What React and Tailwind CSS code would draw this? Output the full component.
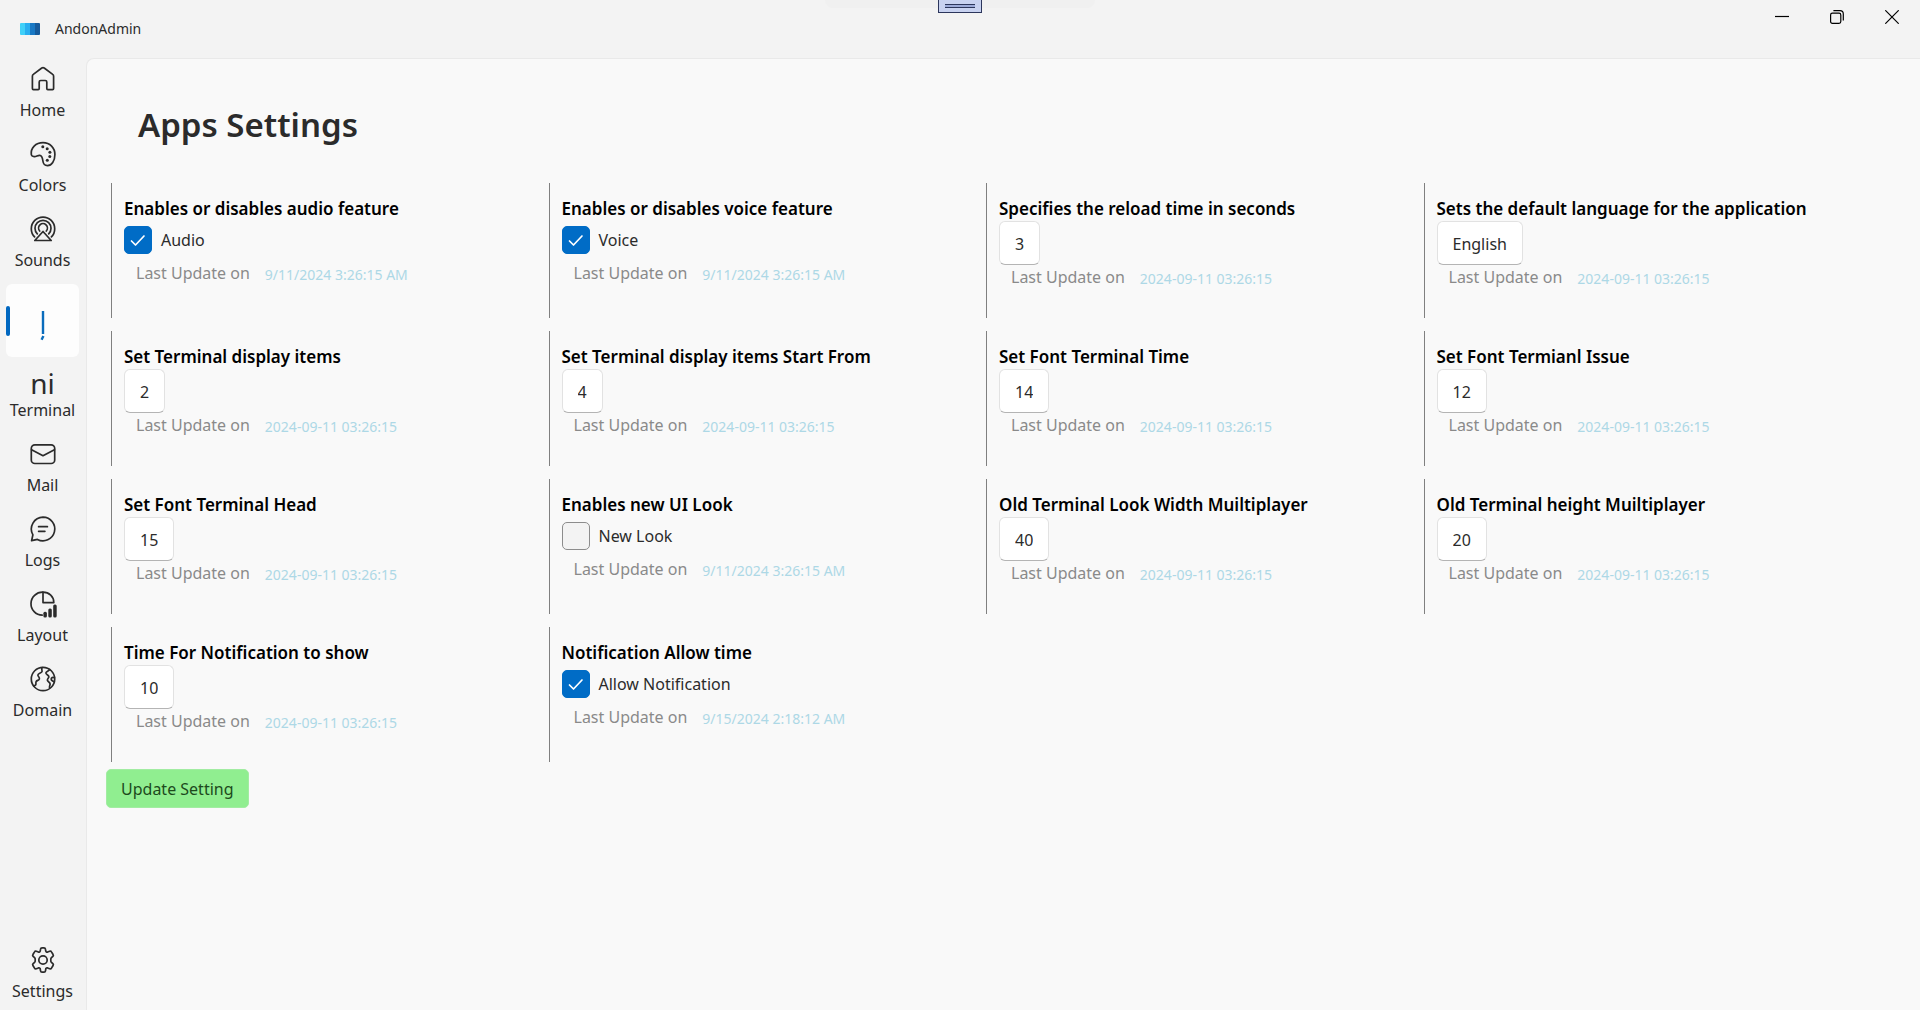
import React, { useState } from "react";

const strokeProps = {
  width: 30,
  height: 30,
  viewBox: "0 0 30 30",
  fill: "none",
  stroke: "currentColor",
  strokeWidth: 1.7,
  strokeLinecap: "round",
  strokeLinejoin: "round",
  "aria-hidden": true,
};

function HomeIcon() {
  return (
    <svg {...strokeProps}>
      <path d="M4.4 12.2c0-.7.3-1.400.9-1.800l8.500-6.400c.7-.5 1.700-.5 2.400 0l8.500 6.400c.6.4.9 1.100.9 1.800v12.400c0 .6-.4 1-1 1h-4.800c-.6 0-1-.4-1-1v-6.600c0-.9-.6-1.500-1.500-1.500h-4.600c-.9 0-1.500.6-1.500 1.500v6.600c0 .6-.4 1-1 1H5.400c-.6 0-1-.4-1-1z" />
    </svg>
  );
}

function PaletteIcon() {
  return (
    <svg {...strokeProps}>
      <path d="M3.300 15.500C2.500 8.800 7.800 3.700 15 3.700c7 0 11.900 5.300 11.900 11.700 0 6.600-3.300 11.200-7.400 11.200-3.400 0-4.300-2.200-4.600-4.600-.4-3.300-.8-5.400-3.200-5.600-2-.2-3.600 1.500-5.500 1.200-1.600-.2-2.700-.6-2.900-2.100z" />
      <g fill="currentColor" stroke="none">
        <circle cx="14.800" cy="7.700" r="1.500" />
        <circle cx="19.200" cy="9.700" r="1.500" />
        <circle cx="21.900" cy="13.300" r="1.500" />
        <circle cx="21.800" cy="17.600" r="1.500" />
        <circle cx="19.300" cy="21.300" r="1.500" />
      </g>
    </svg>
  );
}

function SoundsIcon() {
  return (
    <svg {...strokeProps}>
      <path d="M6.600 22.900a11.700 11.700 0 1 1 16.800 0" />
      <path d="M9.300 19.900a8 8 0 1 1 11.400 0" />
      <path d="M11.700 17a4.400 4.400 0 1 1 6.600 0" />
      <path d="M15 17.500l8.200 9H6.800z" />
    </svg>
  );
}

function PendingIcon() {
  return (
    <svg {...strokeProps} strokeLinecap="butt" strokeWidth="2.400">
      <path d="M15 4v23" />
      <path d="M15.400 29l-1.800 3.800" />
    </svg>
  );
}

function MailIcon() {
  return (
    <svg {...strokeProps}>
      <rect x="3.300" y="5.900" width="23.400" height="18.600" rx="3.600" />
      <path d="M3.600 10.700L15 16.700l11.400-6" />
    </svg>
  );
}

function LogsIcon() {
  return (
    <svg {...strokeProps}>
      <path d="M15 3.200a11.800 11.800 0 1 1-5.600 22.200l-5.800 1.300 1.300-5.900A11.800 11.800 0 0 1 15 3.200z" />
      <path d="M10.600 12.700h8.800M10.600 17.300h6.300" />
    </svg>
  );
}

function LayoutIcon() {
  return (
    <svg {...strokeProps}>
      <path d="M14.800 3.200a11.500 11.500 0 0 0-.6 23" />
      <path d="M15 3.200v10.400h10.800C26 7.700 21 3.200 15 3.200z" />
      <g stroke="none" fill="currentColor">
        <rect x="15.400" y="22.800" width="3.500" height="5.600" rx="1.500" />
        <rect x="20.300" y="19.600" width="3.500" height="8.800" rx="1.500" />
        <rect x="25.200" y="15.400" width="3.500" height="13" rx="1.500" />
      </g>
    </svg>
  );
}

function DomainIcon() {
  return (
    <svg {...strokeProps}>
      <circle cx="15" cy="15" r="11.700" />
      <path d="M14.200 3.600c-1.600 1.600 1 3.200-.6 4.600-1.600 1.300-3.600 1.200-3.700 2.900-.1 1.600 1.900 1.900 1.500 3.700-.3 1.700-2.300 1.300-3.200 2.600-.8 1.200.2 2.600-.6 3.700-.5.7-1.300.8-1.900.8" />
      <path d="M21.800 5.600c-1 1.300-3.600 1.700-3.900 3.300-.2 1.600 2.300 1.900 2.900 3.500.5 1.500-1.700 2.300-1.400 3.900.4 1.800 2.700 1.700 2.700 3.700 0 1.600-1.100 2.500-.5 4M26.400 13.700c-1.800-.7-3.200 0-3.200 1.400 0 1.200 1 2.100 2.700 2.500" />
    </svg>
  );
}

function GearIcon() {
  return (
    <svg {...strokeProps} viewBox="1 1 28 28" strokeWidth="1.600">
      <path d="M12.700 4.900c.1-.7.7-1.200 1.400-1.200h1.800c.7 0 1.300.5 1.400 1.200l.3 1.700c.1.800.9 1.200 1.700 1l1.900-.8c.7-.2 1.400 0 1.700.6l1.500 2.500c.4.600.2 1.400-.3 1.800l-1.400 1.300c-.6.600-.6 3.400 0 4l1.400 1.300c.5.400.7 1.200.3 1.800l-1.500 2.500c-.3.600-1 .8-1.700.6l-1.900-.8c-.8-.2-1.600.2-1.700 1l-.3 1.700c-.1.700-.7 1.200-1.400 1.200h-1.800c-.7 0-1.300-.5-1.400-1.200l-.3-1.700c-.1-.8-.9-1.200-1.700-1l-1.900.8c-.7.2-1.400 0-1.700-.6l-1.500-2.500c-.4-.6-.2-1.400.3-1.800L7.300 17c.6-.6.6-3.400 0-4l-1.400-1.300c-.5-.4-.7-1.200-.3-1.800l1.500-2.500c.3-.6 1-.8 1.700-.6l1.900.8c.8.2 1.600-.2 1.700-1z" />
      <circle cx="15" cy="15" r="3.900" />
    </svg>
  );
}

const navItems = [
  { label: "Home", icon: <HomeIcon /> },
  { label: "Colors", icon: <PaletteIcon /> },
  { label: "Sounds", icon: <SoundsIcon /> },
  { label: "", name: "Apps settings", icon: <PendingIcon />, active: true },
  { label: "Terminal", icon: <span className="pt-2 text-[28px] leading-[30px]">ni</span> },
  { label: "Mail", icon: <MailIcon /> },
  { label: "Logs", icon: <LogsIcon /> },
  { label: "Layout", icon: <LayoutIcon /> },
  { label: "Domain", icon: <DomainIcon /> },
];

const ISO = "2024-09-11 03:26:15";
const US = "9/11/2024 3:26:15 AM";

const settings = [
  { title: "Enables or disables audio feature", check: "Audio", on: true, date: US },
  { title: "Enables or disables voice feature", check: "Voice", on: true, date: US },
  { title: "Specifies the reload time in seconds", value: "3", date: ISO },
  { title: "Sets the default language for the application", value: "English", date: ISO },
  { title: "Set Terminal display items", value: "2", date: ISO },
  { title: "Set Terminal display items Start From", value: "4", date: ISO },
  { title: "Set Font Terminal Time", value: "14", date: ISO },
  { title: "Set Font Termianl Issue", value: "12", date: ISO },
  { title: "Set Font Terminal Head", value: "15", date: ISO },
  { title: "Enables new UI Look", check: "New Look", on: false, date: US },
  { title: "Old Terminal Look Width Muiltiplayer", value: "40", date: ISO },
  { title: "Old Terminal height Muiltiplayer", value: "20", date: ISO },
  { title: "Time For Notification to show", value: "10", date: ISO },
  { title: "Notification Allow time", check: "Allow Notification", on: true, date: "9/15/2024 2:18:12 AM" },
];

function NavItem({ label, name, icon, active }) {
  return (
    <button
      type="button"
      aria-label={name}
      aria-current={active ? "page" : undefined}
      className={
        active
          ? "relative my-px mr-[7px] ml-[6px] flex h-[73px] flex-col items-center rounded-md bg-[#fdfdfd] pt-[23px] text-[#0a6cbc]"
          : "mr-[7px] ml-[6px] flex h-[75px] flex-col items-center overflow-hidden pt-[6px] text-[#2b2b2b]"
      }
    >
      {active && <span className="absolute top-[22px] left-0 h-[30px] w-1 rounded-full bg-[#0067c0]" />}
      <span className="flex h-[30px] items-center justify-center [&>svg]:overflow-visible">{icon}</span>
      <span className="mt-1 text-base leading-6">{label}</span>
    </button>
  );
}

function CheckSetting({ label, initial }) {
  const [on, setOn] = useState(initial);
  return (
    <label className="mb-[2px] flex h-[38px] items-center gap-[9px] self-start text-base text-[#2b2b2b]">
      <span className="grid">
        <input
          type="checkbox"
          checked={on}
          onChange={(e) => setOn(e.target.checked)}
          className="col-start-1 row-start-1 h-7 w-7 appearance-none rounded-[5px] border border-[#8c8c8c] bg-[#f3f3f3] checked:border-[#006cc6] checked:bg-[#006cc6]"
        />
        {on && (
          <svg width="28" height="28" viewBox="0 0 28 28" className="pointer-events-none col-start-1 row-start-1" fill="none" stroke="#fff" strokeWidth="1.700" strokeLinecap="round" strokeLinejoin="round" aria-hidden="true">
            <path d="M7.500 15l4 4 8.500-9" />
          </svg>
        )}
      </span>
      {label}
    </label>
  );
}

function TextSetting({ title, initial }) {
  const [value, setValue] = useState(initial);
  return (
    <input
      type="text"
      aria-label={title}
      value={value}
      onChange={(e) => setValue(e.target.value)}
      className="h-11 self-start rounded-md border border-[#e2e2e2] border-b-[#b4b4b4] bg-white px-[15px] pt-px text-base text-[#2b2b2b] [field-sizing:content]"
    />
  );
}

function SettingCard({ setting }) {
  return (
    <section className="flex min-h-[135px] flex-col border-l border-[#808080] pt-[14px] pl-3">
      <h2 className="text-[17px] leading-6 font-semibold whitespace-nowrap text-black">{setting.title}</h2>
      {setting.check ? (
        <CheckSetting label={setting.check} initial={setting.on} />
      ) : (
        <TextSetting title={setting.title} initial={setting.value} />
      )}
      <p className="flex items-center gap-[15px] pl-3">
        <span className="text-base leading-6 text-[#8a8a8a]">Last Update on</span>
        <time className="pt-1 text-sm leading-5 text-[#add8e6]">{setting.date}</time>
      </p>
    </section>
  );
}

export default function App() {
  return (
    <div className="flex h-screen flex-col overflow-hidden bg-[#f3f3f3] font-['Noto_Sans','Open_Sans',sans-serif]">
      <header className="relative flex h-[58px] shrink-0 items-start justify-between">
        <div className="flex h-[57px] items-center gap-[15px] pl-5">
          <svg width="20" height="12" viewBox="0 0 20 12" aria-hidden="true">
            <rect width="11" height="12" rx="1" fill="#3fd0f8" />
            <rect x="5" width="6" height="12" fill="#28aef0" />
            <rect x="10" width="10" height="12" rx="1" fill="#155a9c" />
            <rect x="10" width="5" height="12" fill="#1878c4" />
          </svg>
          <span className="text-sm text-[#2b2b2b]">AndonAdmin</span>
        </div>
        <div className="absolute top-0 left-1/2 h-2 w-[270px] -translate-x-1/2 rounded-b-lg bg-[#f0f0f0]" />
        <div className="absolute top-0 left-1/2 flex h-[13px] w-11 -translate-x-1/2 justify-center border border-t-0 border-[#2c365c] bg-[#c8d2f0]">
          <span className="mt-1 h-1 w-[30px] border-y border-[#2c365c] bg-[#9caad8]" />
        </div>
        <div className="flex pr-px text-black">
          <button type="button" aria-label="Minimize" className="flex h-[34px] w-[55px] items-center justify-center">
            <svg width="14" height="14" viewBox="0 0 14 14" stroke="currentColor" strokeWidth="1.200" aria-hidden="true">
              <path d="M0 6.500h14" />
            </svg>
          </button>
          <button type="button" aria-label="Restore" className="flex h-[34px] w-[55px] items-center justify-center">
            <svg width="14" height="14" viewBox="0 0 14 14" fill="none" stroke="currentColor" strokeWidth="1.200" aria-hidden="true">
              <rect x=".6" y="3.200" width="10.200" height="10.200" rx="1.800" />
              <path d="M3.400.7H10A3.300 3.300 0 0 1 13.300 4v6.600" />
            </svg>
          </button>
          <button type="button" aria-label="Close" className="flex h-[34px] w-[55px] items-center justify-center">
            <svg width="14" height="14" viewBox="0 0 14 14" stroke="currentColor" strokeWidth="1.200" aria-hidden="true">
              <path d="M.3.3l13.400 13.400M13.700.3L.3 13.700" />
            </svg>
          </button>
        </div>
      </header>

      <div className="flex min-h-0 flex-1">
        <nav className="flex w-[86px] shrink-0 flex-col justify-between" aria-label="Main">
          <div className="flex flex-col">
            {navItems.map((item, i) => (
              <NavItem key={i} {...item} />
            ))}
          </div>
          <div className="-mb-1 flex flex-col">
            <NavItem label="Settings" icon={<GearIcon />} />
          </div>
        </nav>

        <main className="min-w-0 flex-1 rounded-tl-lg border-t border-l border-[#e9e9e9] bg-[#f9f9f9] pt-[42px] pr-[59px] pl-[19px]">
          <h1 className="pl-8 text-[33px] leading-[48px] font-semibold text-[#2b2b2b]">Apps Settings</h1>
          <div className="mt-[34px] ml-[5px] grid grid-cols-4 gap-y-[13px]">
            {settings.map((s) => (
              <SettingCard key={s.title} setting={s} />
            ))}
          </div>
          <button type="button" className="mt-[7px] h-[39px] rounded-[5px] border border-[#a2eca2] bg-[#90ee90] px-[14px] text-base text-[#1d4a1d]">
            Update Setting
          </button>
        </main>
      </div>
    </div>
  );
}
